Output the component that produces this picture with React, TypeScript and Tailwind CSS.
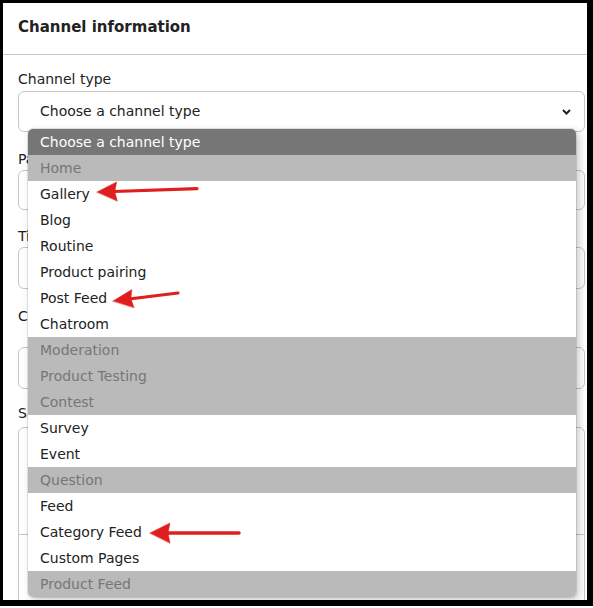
const options: { label: string; disabled?: boolean }[] = [
  { label: "Home", disabled: true },
  { label: "Gallery" },
  { label: "Blog" },
  { label: "Routine" },
  { label: "Product pairing" },
  { label: "Post Feed" },
  { label: "Chatroom" },
  { label: "Moderation", disabled: true },
  { label: "Product Testing", disabled: true },
  { label: "Contest", disabled: true },
  { label: "Survey" },
  { label: "Event" },
  { label: "Question", disabled: true },
  { label: "Feed" },
  { label: "Category Feed" },
  { label: "Custom Pages" },
  { label: "Product Feed", disabled: true },
];

function Label({ text, className }: { text: string; className?: string }) {
  return <div className={`text-[14px] leading-5 text-[#222] ${className ?? ""}`}>{text}</div>;
}

function Arrows() {
  return (
    <svg className="absolute inset-0 pointer-events-none" width="593" height="608" viewBox="0 0 593 608">
      <g fill="#e01e1e" stroke="#e01e1e" strokeLinecap="round">
        <line x1="114" y1="191.5" x2="197" y2="188.6" strokeWidth="3.2" />
        <polygon points="97,192 116.7,181.9 114.8,191.4 117.3,200.9" strokeWidth="0.5" />

        <line x1="129" y1="299" x2="178" y2="293" strokeWidth="3.2" />
        <polygon points="113,301 131.8,289.6 130.9,298.8 134,307.5" strokeWidth="0.5" />

        <line x1="167" y1="533" x2="239" y2="533" strokeWidth="3.4" />
        <polygon points="150,533 170,523 168,533 170,543" strokeWidth="0.5" />
      </g>
    </svg>
  );
}

export default function App() {
  return (
    <div className="relative w-[593px] h-[608px] bg-white font-['DejaVu_Sans',sans-serif]">
      <div className="h-[606px] border-l-[3px] border-t-[3px] border-r-[6px] border-b-[6px] border-black overflow-hidden">
        <div className="h-[52px] border-b border-[#c6c6c6] pl-[15px] pt-[14px]">
          <h2 className="text-[15px] leading-5 font-bold text-[#222]">Channel information</h2>
        </div>

        <div className="pl-[15px] pr-[2px]">
          <Label text="Channel type" className="mt-[14px]" />
          <div className="mt-[2px] h-[41px] rounded-md border border-[#c6c6c6] flex items-center justify-between pl-[21px] pr-[13px]">
            <span className="text-[14px] text-[#222]">Choose a channel type</span>
            <svg width="9" height="6" viewBox="0 0 9 6">
              <path d="M1 1 L4.5 4.5 L8 1" fill="none" stroke="#222" strokeWidth="2" />
            </svg>
          </div>

          <Label text="Page name" className="mt-[17px]" />
          <div className="mt-[1px] h-[40px] rounded-md border border-[#c6c6c6]" />

          <Label text="Title" className="mt-[16px]" />
          <div className="mt-[1px] h-[42px] rounded-md border border-[#c6c6c6]" />

          <Label text="Channel URL" className="mt-[17px]" />
          <div className="mt-[21px] h-[42px] rounded-md border border-[#c6c6c6]" />

          <Label text="Short description" className="mt-[14px]" />
          <div className="mt-[4px] h-[200px] rounded-md border border-[#c6c6c6]">
            <div className="h-[107px] border-b border-[#c6c6c6]" />
          </div>
        </div>
      </div>

      <div className="absolute left-[28px] top-[129px] w-[548px] rounded-[5px] overflow-hidden shadow-[0_0_0_1px_rgba(0,0,0,0.1),3px_3px_8px_rgba(0,0,0,0.22)]">
        <div className="h-[26px] bg-[#767676] pl-[12px] flex items-center text-[14px] text-white">
          Choose a channel type
        </div>
        {options.map((o) => (
          <div
            key={o.label}
            className={`h-[26px] pl-[12px] flex items-center text-[14px] ${
              o.disabled ? "bg-[#bababa] text-[#767676]" : "bg-white text-[#222]"
            }`}
          >
            {o.label}
          </div>
        ))}
      </div>

      <Arrows />
    </div>
  );
}
